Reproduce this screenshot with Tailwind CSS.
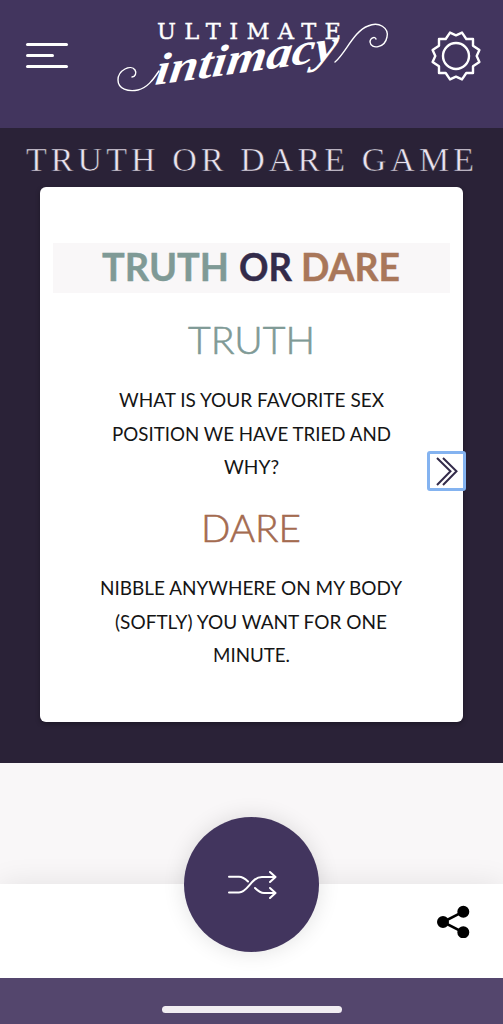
<!DOCTYPE html>
<html lang="en">
<head>
<meta charset="utf-8">
<title>Truth or Dare Game</title>
<script src="https://cdn.jsdelivr.net/npm/@tailwindcss/browser@4"></script>
</head>
<body class="w-[503px] h-[1024px] overflow-hidden bg-[#f9f7f8] flex flex-col font-['Lato',sans-serif]">
<header class="h-[128px] shrink-0 bg-[#42355e] flex justify-between pl-[26px] pr-[22px]">
  <button aria-label="Menu" class="w-[42px] h-[111px] flex flex-col justify-center gap-2">
    <span class="block h-[3px] w-[42px] rounded-full bg-white"></span>
    <span class="block h-[3px] w-[28px] rounded-full bg-white"></span>
    <span class="block h-[3px] w-[42px] rounded-full bg-white"></span>
  </button>
  <svg class="w-[280px] h-[110px]" viewBox="109 0 280 110" fill="none" stroke="white" stroke-linecap="round">
    <text x="156" y="39" textLength="184" font-family="DejaVu Serif" font-size="22.5" fill="white" stroke="white" stroke-width="0.4">ULTIMATE</text>
    <g transform="translate(153 85) skewY(-8) skewX(-8)">
      <text x="0" y="0" textLength="182" lengthAdjust="spacingAndGlyphs" font-family="Liberation Serif" font-style="italic" font-weight="700" font-size="44" fill="white" stroke="none">intimacy</text>
    </g>
    <path stroke-width="1.4" d="M131 77C134 77 136 73 134 70C130 64 117 70 117 80C117 89 127 92 137 90C146 88 152 80 158 71"/>
    <path stroke-width="1.4" d="M334 62C344 54 353 31 367 26C378 21 388 28 386 37C384 48 370 50 369 42C369 38 374 36 375 39"/>
  </svg>
  <button aria-label="Settings" class="w-[50px] h-[111px] flex items-center justify-center">
    <svg class="w-[50px] h-[50px]" viewBox="-25 -25 50 50" fill="none" stroke="white" stroke-width="2.4" stroke-linejoin="round">
      <path d="M0-20.7L6-23.4L10.3-17L17-17L17-10.3L23.4-6L20.7 0L23.4 6L17 10.3L17 17L10.3 17L6 23.4L0 20.7L-6 23.4L-10.3 17L-17 17L-17 10.3L-23.4 6L-20.7 0L-23.4-6L-17-10.3L-17-17L-10.3-17L-6-23.4Z"/>
      <circle r="13"/>
    </svg>
  </button>
</header>
<main class="h-[635px] shrink-0 bg-[#2a2237] flex flex-col items-center">
  <h1 class="h-[59px] pt-[14px] flex justify-center">
    <svg class="w-[503px] h-[40px]" viewBox="0 0 503 40"><text x="26" y="29.3" textLength="448" font-family="Liberation Serif" font-size="34" fill="#e9e3ee" stroke="#2a2237" stroke-width="0.5">TRUTH OR DARE GAME</text></svg>
  </h1>
  <section class="relative w-[423px] h-[535px] rounded-[6px] bg-white pt-[56px] px-[13px] text-center shadow-[0_2px_5px_rgba(0,0,0,0.3)]">
    <h2 class="h-[50px] bg-[#f9f7f8]"><svg class="w-full h-full" viewBox="53 243 397 50" font-family="Lato" font-weight="700" font-size="37.5" stroke-width="0.4"><text x="102" y="281" textLength="127" lengthAdjust="spacingAndGlyphs" fill="#7f9a96" stroke="#7f9a96">TRUTH</text><text x="239" y="281" textLength="53" lengthAdjust="spacingAndGlyphs" fill="#332b4a" stroke="#332b4a">OR</text><text x="301" y="281" textLength="99" lengthAdjust="spacingAndGlyphs" fill="#a9775a" stroke="#a9775a">DARE</text></svg></h2>
    <svg class="w-full h-[90px]" viewBox="53 293 397 90"><text x="188" y="353.5" textLength="127" lengthAdjust="spacingAndGlyphs" font-family="Lato" font-weight="300" font-size="37.5" fill="#7f9a96" stroke="#7f9a96" stroke-width="0.6">TRUTH</text></svg>
    <svg class="w-full h-[101px]" viewBox="53 383 397 101" font-family="Lato" font-size="19" fill="#151515"><text x="119" y="407" textLength="265" lengthAdjust="spacingAndGlyphs">WHAT IS YOUR FAVORITE SEX</text><text x="112" y="440.5" textLength="279" lengthAdjust="spacingAndGlyphs">POSITION WE HAVE TRIED AND</text><text x="224" y="474" textLength="55" lengthAdjust="spacingAndGlyphs">WHY?</text></svg>
    <svg class="w-full h-[87px]" viewBox="53 484 397 87"><text x="201" y="541.5" textLength="100" lengthAdjust="spacingAndGlyphs" font-family="Lato" font-weight="300" font-size="37.5" fill="#a46b50" stroke="#a46b50" stroke-width="0.6">DARE</text></svg>
    <svg class="w-full h-[101px]" viewBox="53 571 397 101" font-family="Lato" font-size="19" fill="#151515"><text x="100" y="595" textLength="302" lengthAdjust="spacingAndGlyphs">NIBBLE ANYWHERE ON MY BODY</text><text x="115" y="628.5" textLength="272" lengthAdjust="spacingAndGlyphs">(SOFTLY) YOU WANT FOR ONE</text><text x="213" y="662" textLength="77" lengthAdjust="spacingAndGlyphs">MINUTE.</text></svg>
    <button aria-label="Next" class="absolute left-[387px] top-[264px] w-[39px] h-[40px] rounded-[3px] border-[3px] border-[#84b3f0]">
      <svg class="w-[33px] h-[34px]" viewBox="430 454 33 34" fill="none" stroke="#332b4a" stroke-width="2"><path d="M437 458L450.5 471.3L437 485M443 458L456.5 471.3L443 485"/></svg>
    </button>
  </section>
</main>
<div class="h-[121px] shrink-0 bg-[#f9f7f8]"></div>
<nav class="relative h-[94px] shrink-0 bg-white shadow-[0_0_28px_rgba(0,0,0,0.09)] flex justify-end pr-[33px] pt-[21px]">
  <button aria-label="Shuffle" class="absolute left-[184px] top-[-67px] w-[135px] h-[135px] rounded-full bg-[#42355e] shadow-[0_0_22px_rgba(0,0,0,0.12)] flex items-center justify-center pb-px">
    <svg class="w-[50px] h-[30px]" viewBox="227 869 50 30" fill="none" stroke="white" stroke-width="2" stroke-linecap="round" stroke-linejoin="round"><path d="M229 876.7H239C243 876.7 245 878.5 248 881.5M229 892.4H239C248 892.4 251 877 262 877H275M270 872L275.5 877L270 882M255 888C258 891 260 893 264 893H275M270 888L275.5 893L270 898"/></svg>
  </button>
  <button aria-label="Share" class="w-[33px] h-[33px]"><svg class="w-[33px] h-[33px]" viewBox="437 905 33 33" stroke="black" stroke-width="2.6"><path d="M463.3 911.7L443 922L463.3 932.3" fill="none"/><circle cx="463.3" cy="911.7" r="4.7"/><circle cx="443" cy="922" r="4.7"/><circle cx="463.3" cy="932.3" r="4.7"/></svg></button>
</nav>
<footer class="relative grow bg-[#54466d] flex justify-center pt-[28px]">
  <div class="w-[180px] h-[7px] rounded-full bg-[#f1edf2]"></div>
</footer>
</body>
</html>
